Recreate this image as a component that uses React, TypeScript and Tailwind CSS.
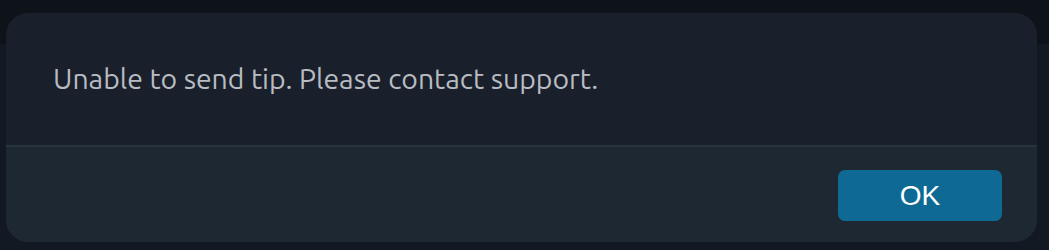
export default function App() {
    return (
        <div className="relative h-[250px] w-full overflow-hidden bg-[#121922]">
            <div className="h-[44px] w-full bg-[#0e131a]"></div>
            <div className="absolute left-[6px] top-[13px] flex h-[229px] w-[1031px] flex-col overflow-hidden rounded-[22px] bg-[#1a202b]">
                <div className="h-[132px] pl-[47px] pt-[46px]">
                    <p className="font-['Ubuntu','Noto_Sans',sans-serif] text-[28.4px] leading-[40px] text-[#b8bcc2]">
                        Unable to send tip. Please contact support.
                    </p>
                </div>
                <div className="h-[2px] bg-[#29333e]"></div>
                <div className="flex flex-1 items-center justify-end bg-[#1e2833] pr-[35px]">
                    <button className="mt-[2px] h-[51px] w-[164px] rounded-[7px] bg-[#0e6a94] font-['Liberation_Sans',Arial,sans-serif] text-[28px] text-white">
                        OK
                    </button>
                </div>
            </div>
        </div>
    );
}
